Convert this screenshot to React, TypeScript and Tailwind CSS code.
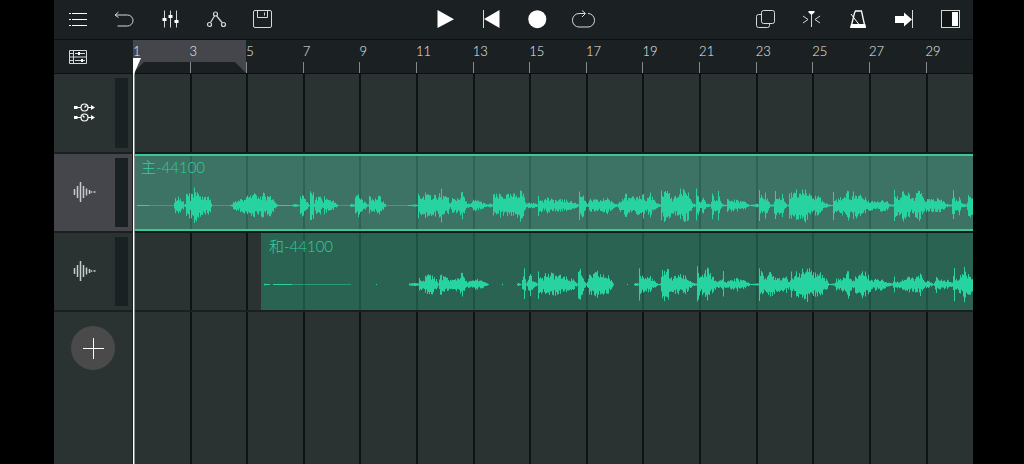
import React from 'react';

interface IconProps {
  children: React.ReactNode;
}

const Icon: React.FC<IconProps> = ({ children }) => (
  <svg width={24} height={25} viewBox="0 0 24 25" fill="none" stroke="#d6d8d8" strokeWidth={1} className="overflow-visible">
    {children}
  </svg>
);

interface Tool {
  label: string;
  icon: React.ReactNode;
}

const editTools: Tool[] = [
  {
    label: 'Menu',
    icon: <path d="M4 6.5h2M7 6.5h15M4 12.5h2M7 12.5h15M4 18.5h2M7 18.5h15" stroke="#fff" strokeWidth="1.2" />,
  },
  {
    label: 'Undo',
    icon: <path d="M7.5 5L4 8l3.5 2.5M4 8h12.5a5.5 5.5 0 0 1 0 11H6.500" />,
  },
  {
    label: 'Mixer',
    icon: (
      <>
        <path d="M7.500 3.500v17M13.500 3.500v17M19.500 3.500v17" />
        <path d="M5.500 11h4v3h-4zM11.500 8h4v3h-4zM17.500 13h4v3h-4z" fill="#fff" stroke="none" />
      </>
    ),
  },
  {
    label: 'Automation',
    icon: (
      <g strokeWidth="1.2">
        <circle cx="12.500" cy="7" r="2" />
        <circle cx="6.500" cy="17.500" r="2" />
        <circle cx="20.500" cy="17.500" r="2" />
        <path d="M11.500 9l-4 6.500M13.700 9l5.300 6.500" />
      </g>
    ),
  },
  {
    label: 'Save',
    icon: (
      <>
        <rect x="4.500" y="3.500" width="18" height="17" rx="1.500" />
        <path d="M8.500 3.500v7h10v-7M15.500 5.500v3" />
      </>
    ),
  },
];

const transportTools: Tool[] = [
  { label: 'Play', icon: <path d="M4.500 3L21 12.200 4.500 21z" fill="#fff" stroke="none" /> },
  {
    label: 'Rewind',
    icon: (
      <>
        <path d="M20.500 3v18L5 12z" fill="#fff" stroke="none" />
        <path d="M4.500 3v18" />
      </>
    ),
  },
  { label: 'Record', icon: <circle cx="12.300" cy="12.200" r="9" fill="#fff" stroke="none" /> },
  {
    label: 'Loop',
    icon: (
      <>
        <path d="M11 3.500l3.500 3-3.500 3.500" />
        <path d="M14 6.500H8A6.500 6.500 0 0 0 1.500 13v.5A6.500 6.500 0 0 0 8 20h9a6.500 6.500 0 0 0 6.500-6.500V13A6.500 6.500 0 0 0 17 6.500" />
      </>
    ),
  },
];

const viewTools: Tool[] = [
  {
    label: 'Duplicate',
    icon: (
      <>
        <rect x="7.500" y="3.500" width="13" height="13" rx="2" />
        <path d="M7.500 7.500h-3a2 2 0 0 0-2 2v9a2 2 0 0 0 2 2h9a2 2 0 0 0 2-2v-2" />
      </>
    ),
  },
  {
    label: 'Split',
    icon: (
      <>
        <path d="M3 9l5 3.500L3 16M20 9l-5 3.500 5 3.500M11.500 6v14" />
        <path d="M8.500 4h6v1.500L11.500 8l-3-2.500z" fill="#fff" stroke="none" />
      </>
    ),
  },
  {
    label: 'Metronome',
    icon: (
      <>
        <path d="M9.500 4h6l3.500 16H5L8.500 6z" stroke="#fff" strokeWidth="1.300" />
        <path d="M5 17h14.300l.7 4H4.200z" fill="#fff" stroke="none" />
        <path d="M5 7l8 10.500" stroke="#fff" />
      </>
    ),
  },
  {
    label: 'Go to end',
    icon: (
      <>
        <path d="M3 9h9V5.500l8 7-8 7V16H3z" fill="#fff" stroke="none" />
        <path d="M20.500 3v18" />
      </>
    ),
  },
  {
    label: 'Side panel',
    icon: (
      <>
        <rect x="3.500" y="3.500" width="18" height="17" fill="#111516" />
        <path d="M14 5h6v14h-6z" fill="#fff" stroke="none" />
      </>
    ),
  },
];

const ToolGroup: React.FC<{ tools: Tool[] }> = ({ tools }) => (
  <div className="flex">
    {tools.map((tool) => (
      <button key={tool.label} type="button" aria-label={tool.label} className="flex w-[46px] h-full items-center justify-center">
        <Icon>{tool.icon}</Icon>
      </button>
    ))}
  </div>
);

// [x, amplitude] pairs, interpolated into one bar per pixel
const leadWave: number[][] = [
  [137, 0.5], [159, 0.2], [173, 0.2], [174, 3], [175, 8], [178, 9], [183, 4], [184, 1], [185, 2], [186, 12], [189, 15], [190, 5], [191, 14], [194, 18], [198, 14],
  [202, 10], [205, 9], [208, 9], [210, 7], [212, 0.2], [229, 0.2], [232, 1], [233, 4], [235, 5], [240, 7], [247, 10], [253, 13], [258, 10], [263, 13],
  [267, 11], [270, 11], [273, 7], [277, 1], [278, 0.5], [289, 0.5], [290, 0.2], [295, 1.5], [299, 0.5], [300, 11], [303, 11], [307, 4], [309, 0.5], [310, 16], [313, 15],
  [314, 2], [316, 10], [320, 9], [323, 3], [324, 10], [328, 6], [333, 5], [338, 0.2], [349, 0.2], [351, 1.5], [354, 1], [355, 9], [358, 13], [362, 6],
  [365, 4], [368, 1], [369, 10], [373, 6], [379, 11], [383, 5], [386, 0.2], [406, 0.2], [415, 1], [417, 0.5], [418, 13], [422, 9], [425, 15], [428, 11],
  [435, 13], [437, 6], [439, 13], [441, 17], [443, 10], [448, 9], [450, 2], [452, 8], [457, 8], [462, 15], [465, 5], [470, 1.5], [473, 6], [478, 6],
  [483, 3], [487, 1], [490, 2], [492, 1], [493, 12], [500, 12], [507, 12], [513, 12], [520, 17], [523, 13], [526, 2], [528, 3], [533, 3], [537, 1],
  [538, 11], [542, 6], [547, 9], [553, 6], [555, 6], [562, 7], [570, 5], [575, 3], [578, 1], [579, 15], [583, 12], [585, 5], [587, 1], [590, 7],
  [600, 6], [607, 9], [613, 3], [617, 1], [619, 5], [625, 14], [628, 8], [637, 10], [643, 13], [645, 5], [650, 14], [655, 4], [660, 1], [661, 16],
  [665, 17], [669, 15], [671, 8], [675, 10], [680, 17], [684, 18], [688, 15], [692, 3], [695, 1], [696, 17], [698, 10], [700, 3], [703, 9], [706, 2],
  [710, 1], [712, 14], [714, 6], [716, 6], [718, 15], [720, 5], [723, 1], [726, 0.5], [727, 7], [737, 6], [745, 4], [749, 0.5], [754, 1], [757, 2],
  [758, 1], [759, 18], [762, 8], [765, 15], [767, 8], [769, 3], [770, 1], [773, 1], [775, 16], [777, 8], [782, 13], [785, 3], [787, 0.5], [788, 1],
  [789, 14], [793, 12], [796, 17], [800, 15], [805, 18], [810, 11], [818, 11], [822, 6], [828, 1], [832, 0.5], [833, 15], [835, 6], [840, 9], [848, 16],
  [851, 6], [853, 15], [860, 12], [865, 8], [875, 4], [882, 7], [887, 5], [890, 1], [893, 1], [894, 16], [897, 10], [903, 17], [908, 13], [912, 8],
  [919, 17], [923, 8], [928, 7], [937, 8], [943, 5], [948, 1], [951, 1], [953, 16], [955, 5], [959, 10], [962, 2], [966, 1], [968, 11], [973, 14],
];

const harmonyWave: number[][] = [
  [264, 0.7], [269, 0.5], [270, 0], [272, 0], [273, 0.5], [297, 0.3], [350, 0.3], [351, 0], [375, 0], [376, 0.5], [377, 0], [408, 0], [409, 1], [415, 1.5], [418, 1],
  [419, 7], [423, 4], [425, 10], [432, 11], [436, 6], [438, 1], [440, 11], [447, 7], [452, 5], [455, 6], [462, 13], [465, 4], [472, 4], [477, 6],
  [482, 4], [487, 1], [489, 0], [501, 0], [502, 0.8], [503, 0], [516, 0], [518, 1.5], [521, 0.3], [522, 5], [524, 17], [526, 1], [528, 6], [530, 12],
  [533, 4], [537, 1], [538, 15], [542, 8], [545, 12], [553, 12], [563, 9], [573, 6], [577, 1], [578, 15], [580, 18], [583, 7], [586, 1], [589, 10],
  [597, 14], [600, 11], [608, 10], [613, 1], [614, 0], [626, 0], [627, 0.5], [628, 0], [633, 0], [635, 1.5], [638, 1], [639, 17], [643, 8], [650, 9],
  [655, 3], [658, 0.5], [660, 1], [662, 17], [668, 17], [670, 7], [678, 11], [685, 10], [690, 4], [695, 1], [696, 1], [697, 20], [700, 8], [707, 18],
  [712, 9], [717, 3], [722, 6], [723, 14], [724, 3], [730, 5], [737, 7], [745, 4], [750, 0.5], [758, 1], [759, 19], [763, 10], [770, 13], [777, 8],
  [786, 10], [789, 3], [791, 13], [793, 5], [796, 14], [807, 18], [813, 14], [822, 12], [827, 5], [829, 0.5], [834, 1], [836, 6], [843, 8], [848, 15],
  [852, 3], [855, 9], [862, 15], [868, 11], [873, 3], [875, 7], [882, 6], [888, 2], [892, 1], [894, 8], [895, 3], [907, 8], [917, 8], [920, 12],
  [923, 5], [928, 4], [933, 0.5], [936, 9], [938, 5], [947, 5], [952, 2], [954, 18], [955, 5], [960, 10], [964, 18], [968, 11], [973, 10],
];

const noise = (n: number) => {
  const v = Math.sin(n * 12.9898) * 43758.5453;
  return v - Math.floor(v);
};

const buildPath = (points: number[][], start: number) => {
  let d = '';
  for (let i = 0; i < points.length - 1; i++) {
    const [x0, a0] = points[i];
    const [x1, a1] = points[i + 1];
    for (let x = x0; x < x1; x++) {
      const amp = a0 + ((a1 - a0) * (x - x0)) / (x1 - x0);
      if (amp <= 0) continue;
      // keep the peaks, roughen everything between them
      const floor = x === x0 ? 0.8 : 0.42;
      const up = amp < 2 ? amp : amp * (floor + noise(x) * (1 - floor));
      const down = amp < 2 ? amp : amp * (floor + noise(x + 500) * (1 - floor));
      d += `M${x - start} ${(20.5 - up).toFixed(1)}h1V${(20.5 + down).toFixed(1)}h-1z`;
    }
  }
  return d;
};

interface ClipProps {
  name: string;
  points: number[][];
  start: number;
  selected?: boolean;
}

const Clip: React.FC<ClipProps> = ({ name, points, start, selected }) => (
  <div
    className={`flex h-full flex-col justify-between border-y-2 pb-1 ${
      selected ? 'border-[#3cc79b] bg-[#4fb396]/50' : 'ml-[15.24%] border-transparent bg-[#2b9374]/50'
    }`}
  >
    <span className={`px-2 text-[15px] font-light leading-[22px] ${selected ? 'text-[#36cb9e]' : 'text-[#2fd0a0]'}`}>{name}</span>
    <svg className="h-10 w-full" viewBox={`0 0 ${973 - start} 40`} preserveAspectRatio="none" aria-hidden="true">
      <path d={buildPath(points, start)} fill="#27d3a0" />
    </svg>
  </div>
);

const WaveIcon = () => (
  <svg width={24} height={22} viewBox="0 0 24 22" stroke="#c9cbcc" strokeWidth={1.5} aria-hidden="true">
    <path d="M2.500 7v6M5.500 4v12M8.500 0v20M11.500 4v12M14.500 6.500v7M17.500 8v4M19.500 9.300v1.500M21.500 10h2" />
  </svg>
);

const RoutingIcon = () => (
  <svg width={24} height={22} viewBox="0 0 24 22" fill="none" stroke="#fff" strokeWidth={1.2} aria-hidden="true">
    {[5.5, 15.5].map((y) => (
      <g key={y}>
        <path d={`M4 ${y}h5M16 ${y}h4M12.500 ${y}l${y < 10 ? '2-2' : '-2-2'}`} />
        <circle cx="12.500" cy={y} r="3.500" />
        <path d={`M2 ${y - 1.5}h3.500v3H2zM19 ${y - 2.5}l4 2.500-4 2.500z`} fill="#fff" stroke="none" />
      </g>
    ))}
  </svg>
);

interface TrackHeaderProps {
  label: string;
  icon: React.ReactNode;
  className: string;
}

const TrackHeader: React.FC<TrackHeaderProps> = ({ label, icon, className }) => (
  <div className={`flex justify-between pr-1 ${className}`}>
    <button type="button" aria-label={label} className="flex flex-1 items-center justify-center pr-[2px]">
      {icon}
    </button>
    <div className="my-1 w-[13px] bg-[#1a2122]" />
  </div>
);

const bars = [1, 3, 5, 7, 9, 11, 13, 15, 17, 19, 21, 23, 25, 27, 29];

export default function App() {
  return (
    <div className="flex min-h-screen bg-black pl-[54px] pr-[51px] font-['Lato','Noto_Sans_CJK_SC',sans-serif]">
      <div className="flex min-w-0 flex-1 flex-col bg-[#2b3332]">
        <header className="flex h-10 justify-between border-b border-[#0c1011] bg-[#1b2122]">
          <ToolGroup tools={editTools} />
          <ToolGroup tools={transportTools} />
          <ToolGroup tools={viewTools} />
        </header>

        <div className="flex flex-1">
          <aside className="flex w-[79px] shrink-0 flex-col border-r border-[#1b2122]">
            <div className="flex h-[34px] items-center border-b border-[#0c1011] bg-[#1b2122] pl-[14px]">
              <button type="button" aria-label="Track list">
                <svg width={20} height={16} viewBox="0 0 20 16" fill="none" stroke="#d6d8d8">
                  <path d="M1.500 1.500h17v13h-17zM5.500 1.500v13M1.500 4.500h4M1.500 8h17M1.500 11.500h4M7 4.500h10M7 11.500h10" />
                  <path d="M10 3h2v3h-2zM13 10h2v3h-2z" fill="#fff" stroke="none" />
                </svg>
              </button>
            </div>
            <div className="flex flex-col gap-[2px] border-b-2 border-[#1a2021] bg-[#1a2021]">
              <TrackHeader label="Master track" icon={<RoutingIcon />} className="h-[78px] bg-[#2b3332]" />
              <TrackHeader label="Audio track 1" icon={<WaveIcon />} className="h-[77px] bg-[#45464b]" />
              <TrackHeader label="Audio track 2" icon={<WaveIcon />} className="h-[77px] bg-[#2b3332]" />
            </div>
            <button
              type="button"
              aria-label="Add track"
              className="mt-[14px] flex size-11 items-center justify-center self-center rounded-full bg-[#4a4a4a]"
            >
              <svg width={22} height={22} viewBox="0 0 22 22" stroke="#fff">
                <path d="M11.500 1v21M1 11.500h21" />
              </svg>
            </button>
          </aside>

          <main className="relative flex min-w-0 flex-1 flex-col">
            <div className="grid h-[34px] border-b border-[#0c1011] bg-[#1b2122]">
              {/* Loop range */}
              <div className="col-start-1 row-start-1 w-[13.48%]">
                <div className="h-[22px] bg-[#45464b]" />
                <div className="flex justify-between">
                  <svg width={11} height={11} viewBox="0 0 11 11" fill="#45464b">
                    <path d="M0 0h11L0 11z" />
                  </svg>
                  <svg width={11} height={11} viewBox="0 0 11 11" fill="#45464b">
                    <path d="M0 0h11v11z" />
                  </svg>
                </div>
              </div>
              <div className="col-start-1 row-start-1 flex overflow-hidden">
                {bars.map((bar) => (
                  <div key={bar} className="flex w-[6.741%] shrink-0 flex-col justify-between">
                    <span className="pt-[3px] text-[13px] font-light leading-4 text-[#eceeee]">{bar}</span>
                    <span className="h-[11px] border-l border-[#85898a]" />
                  </div>
                ))}
              </div>
            </div>

            <div className="grid flex-1">
              <div className="col-start-1 row-start-1 flex overflow-hidden">
                {bars.map((bar) => (
                  <div key={bar} className="w-[6.741%] shrink-0 border-l-2 border-[#0d1212]" />
                ))}
              </div>
              <div className="col-start-1 row-start-1">
                <div className="h-20 border-b-2 border-[#141a1a]" />
                <div className="h-[79px] border-b-2 border-[#141a1a]">
                  <Clip name="主-44100" points={leadWave} start={133} selected />
                </div>
                <div className="h-[79px] border-b-2 border-[#1a2021]">
                  <Clip name="和-44100" points={harmonyWave} start={261} />
                </div>
              </div>
            </div>

            {/* Playhead */}
            <div className="pointer-events-none absolute bottom-0 left-0 top-[18px] w-[2px] border-r border-[#8d9291] bg-white">
              <svg width={8} height={16} viewBox="0 0 8 16" fill="#fff">
                <path d="M0 0h8L1 16H0z" />
              </svg>
            </div>
          </main>
        </div>
      </div>
    </div>
  );
}
